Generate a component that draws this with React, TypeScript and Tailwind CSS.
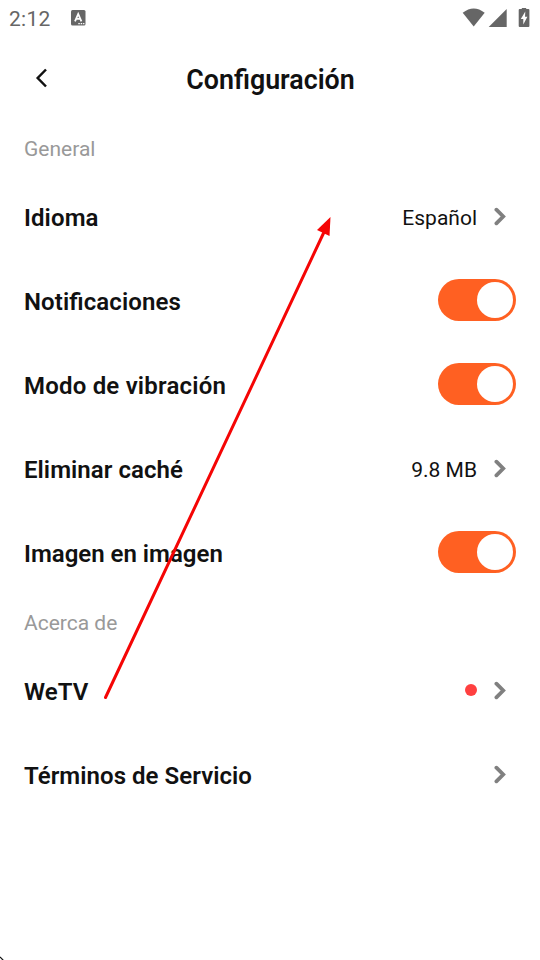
type Item = {
  label: string;
  value?: string;
  on?: boolean;
  dot?: boolean;
  tracking?: string;
};

const general: Item[] = [
  { label: "Idioma", value: "Español", tracking: "tracking-[0.1px]" },
  { label: "Notificaciones", on: true, tracking: "tracking-[0.1px]" },
  { label: "Modo de vibración", on: true, tracking: "tracking-[0.2px]" },
  { label: "Eliminar caché", value: "9.8 MB", tracking: "tracking-[0.05px]" },
  { label: "Imagen en imagen", on: true },
];

const about: Item[] = [
  { label: "WeTV", dot: true, tracking: "tracking-[0.1px]" },
  { label: "Términos de Servicio", tracking: "tracking-[0.05px]" },
];

function StatusBar() {
  return (
    <div className="flex h-9 items-center justify-between pl-[9px] pr-2.5 text-[#666666]">
      <div className="flex items-center">
        <span className="w-[62px] pt-0.5 text-[21px] leading-9 tracking-[0.3px]">2:12</span>
        <svg width="15" height="16" viewBox="0 0 15 16">
          <rect width="14.5" height="15.5" rx="1.5" fill="#666666" />
          <path d="M4 11.3 L7.2 4 L10.4 11.3 M5.3 8.9 H9.2" fill="none" stroke="#fff" strokeWidth="1.8" />
          <path d="M7.3 13.6 h1.5 M9.7 13.6 h1.5 M12.1 13.6 h1.3" stroke="#fff" strokeWidth="1.4" />
        </svg>
      </div>
      <svg width="68" height="20" viewBox="0 0 68 20" fill="#666666">
        <path d="M0.7 4.8 Q11.7 -3.8 22.7 4.8 L11.7 18.6 Z" />
        <path d="M44.7 1 V19 H26.7 Z" />
        <path d="M59.8 -1 h4.4 v2 h2.2 q1 0 1 1 V18 q0 1 -1 1 H57.7 q-1 0 -1 -1 V2 q0 -1 1 -1 h2.1 Z" />
        <path d="M63.3 3.6 L58.8 11 H61.3 V16.5 L65.4 8.7 H63 Z" fill="#fff" />
      </svg>
    </div>
  );
}

function Toggle({ on, label }: { on: boolean; label: string }) {
  return (
    <button
      role="switch"
      aria-checked={on}
      aria-label={label}
      className="flex h-[42px] w-[78px] items-center justify-end rounded-full bg-[#ff6022] p-[3px]"
    >
      <span className="size-9 rounded-full bg-white" />
    </button>
  );
}

function Row({ item }: { item: Item }) {
  return (
    <div className="flex h-21 items-center justify-between pb-0.5">
      <span className={`pt-[3px] text-2xl font-semibold [font-feature-settings:'liga'] ${item.tracking ?? ""}`}>
        {item.label}
      </span>
      {item.on !== undefined ? (
        <Toggle on={item.on} label={item.label} />
      ) : (
        <div className="flex items-center pr-[9px]">
          {item.value && <span className="mr-[17px] pt-1 text-[21px] leading-8">{item.value}</span>}
          {item.dot && <span className="mr-[17px] size-3 rounded-full bg-[#ff4040]" />}
          <svg width="13" height="19" viewBox="0 0 13 19" fill="none" stroke="#808080" strokeWidth="3.8" strokeLinecap="round">
            <path d="M2.4 2.7 L9.2 9.5 L2.4 16.3" />
          </svg>
        </div>
      )}
    </div>
  );
}

function Section({ title, items }: { title: string; items: Item[] }) {
  return (
    <section>
      <h2 className="h-[54px] text-[21px] leading-[56px] text-[#999999]">{title}</h2>
      {items.map((item) => (
        <Row key={item.label} item={item} />
      ))}
    </section>
  );
}

export default function App() {
  return (
    <div className="relative h-[960px] w-[540px] overflow-hidden bg-white font-['Roboto',sans-serif] text-[#111111]">
      <StatusBar />
      <header className="grid h-[85px] grid-cols-[60px_1fr_60px] items-center px-6">
        <button aria-label="Atrás" className="pb-0.5 pl-[11px]">
          <svg width="14" height="20" viewBox="0 0 14 20" fill="none" stroke="#111111" strokeWidth="2.5">
            <path d="M11 1.5 L2.7 10 L11 18.5" />
          </svg>
        </button>
        <h1 className="pt-[3px] pl-px text-center text-[26.8px] font-semibold">Configuración</h1>
      </header>
      <main className="px-6">
        <Section title="General" items={general} />
        <Section title="Acerca de" items={about} />
      </main>
      <svg className="pointer-events-none absolute inset-0" width="540" height="960">
        <path d="M105.5 697.5 L325 230" stroke="#f50505" strokeWidth="3" strokeLinecap="round" />
        <path d="M330.5 217 L329.5 236 L317 230 Z" fill="#f50505" />
        <path d="M0 957 L3.5 960.5" stroke="#111111" strokeWidth="1.2" />
      </svg>
    </div>
  );
}
